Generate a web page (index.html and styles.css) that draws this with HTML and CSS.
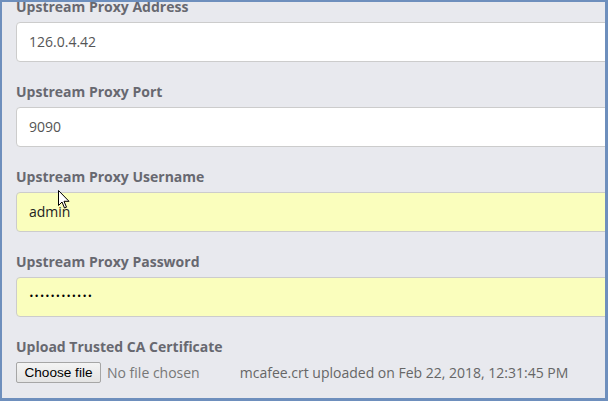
FILE: index.html
```html
<!DOCTYPE html>
<html>
<head>
<meta charset="utf-8">
<link rel="stylesheet" href="styles.css">
</head>
<body>
<div class="frame">
  <div class="form">
    <div class="group">
      <label class="label">Upstream Proxy Address</label>
      <div class="input">126.0.4.42</div>
    </div>
    <div class="group">
      <label class="label">Upstream Proxy Port</label>
      <div class="input">9090</div>
    </div>
    <div class="group">
      <label class="label">Upstream Proxy Username</label>
      <div class="input autofill">admin</div>
    </div>
    <div class="group">
      <label class="label">Upstream Proxy Password</label>
      <div class="input autofill dots">••••••••••••</div>
    </div>
    <div class="group">
      <label class="label">Upload Trusted CA Certificate</label>
      <div class="file-row">
        <button class="file-btn">Choose file</button>
        <span class="no-file">No file chosen</span>
        <span class="uploaded">mcafee.crt uploaded on Feb 22, 2018, 12:31:45 PM</span>
      </div>
    </div>
  </div>
  <svg class="cursor" width="13" height="20" viewBox="0 0 13 20">
    <path d="M0.5 0.5 L0.5 15.5 L4 12 L6.5 18 L8.5 17.2 L6 11.3 L11 11.3 Z" fill="#fff" stroke="#000" stroke-width="1" stroke-linejoin="miter"/>
  </svg>
</div>
</body>
</html>
```
FILE: styles.css
```css
html, body {
  margin: 0;
  padding: 0;
  width: 608px;
  height: 401px;
  overflow: hidden;
}
.frame {
  position: relative;
  box-sizing: border-box;
  width: 608px;
  height: 401px;
  border-style: solid;
  border-color: #6e8fbd;
  border-width: 2px 3px 3px 2px;
  background: #e8e9ee;
  overflow: hidden;
}
.form {
  margin-top: -5px;
  padding-left: 14px;
  font-family: "Open Sans", sans-serif;
}
.group {
  margin-bottom: 20px;
}
.label {
  display: block;
  font-size: 14px;
  line-height: 20px;
  font-weight: 700;
  color: #676870;
  margin-bottom: 5px;
}
.input {
  box-sizing: border-box;
  width: 640px;
  height: 40px;
  background: #fff;
  border: 1px solid #cccccc;
  border-radius: 4px;
  padding: 0 12px;
  font-size: 14px;
  line-height: 38px;
  color: #555555;
}
.autofill {
  background: #fafebd;
  color: #222;
}
.dots {
  color: #000;
  font-family: "DejaVu Sans", sans-serif;
  font-size: 8px;
  letter-spacing: 0.6px;
  line-height: 38px;
}
.file-row {
  display: flex;
  align-items: center;
  height: 21px;
}
.file-btn {
  box-sizing: border-box;
  width: 85px;
  height: 21px;
  padding: 0;
  font-family: "Liberation Sans", Arial, sans-serif;
  font-size: 13.6px;
  color: #000;
  background: linear-gradient(#f4f4f4, #e4e4e4);
  border: 1px solid #a6a6a6;
  border-radius: 2px;
}
.no-file {
  margin-left: 6px;
  font-size: 14px;
  color: #777;
}
.uploaded {
  margin-left: 40px;
  font-size: 14px;
  color: #666;
}
.cursor {
  position: absolute;
  left: 56px;
  top: 188px;
}
```
